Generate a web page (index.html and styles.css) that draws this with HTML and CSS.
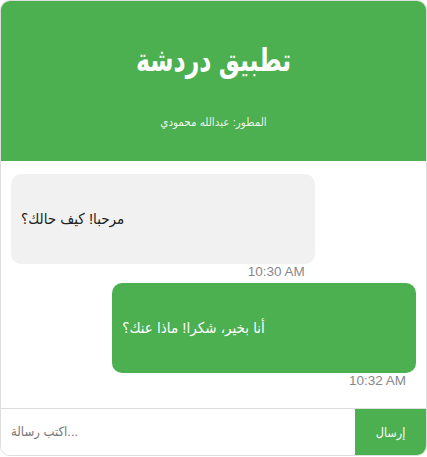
FILE: index.html
```html
<!DOCTYPE html>
<html lang="ar">
<head>
<meta charset="utf-8">
<title>تطبيق دردشة</title>
<link rel="stylesheet" href="styles.css">
</head>
<body>
<div class="chat">
  <header class="chat-header">
    <h1 class="chat-title"><span class="chat-title-text">تطبيق دردشة</span></h1>
    <p class="chat-sub">المطور: عبدالله محمودي</p>
  </header>
  <main class="messages">
    <div class="msg received">
      <div class="bubble">مرحبا! كيف حالك؟</div>
      <div class="time">10:30 AM</div>
    </div>
    <div class="msg sent">
      <div class="bubble">أنا بخير، شكرا! ماذا عنك؟</div>
      <div class="time">10:32 AM</div>
    </div>
  </main>
  <form class="composer">
    <input class="composer-input" type="text" placeholder="اكتب رسالة...">
    <button class="composer-send" type="button">إرسال</button>
  </form>
</div>
</body>
</html>
```
FILE: styles.css
```css
html, body {
  margin: 0;
  padding: 0;
  background: #ffffff;
}
body {
  font-family: "Liberation Sans", "DejaVu Sans Condensed", "DejaVu Sans", sans-serif;
}
.chat {
  box-sizing: border-box;
  width: 427px;
  height: 456px;
  border: 1px solid #dddddd;
  border-radius: 10px;
  overflow: hidden;
  display: flex;
  flex-direction: column;
  background: #ffffff;
}
.chat-header {
  background: #4caf50;
  color: #ffffff;
  text-align: center;
  padding: 20px;
  height: 160px;
  box-sizing: border-box;
  flex: none;
}
.chat-title {
  margin: 21px 0 0;
  font-size: 32px;
  font-weight: bold;
  line-height: 37px;
}
.chat-title-text {
  display: inline-block;
  transform: scaleX(0.82);
}
.chat-sub {
  margin: 35px 0 0;
  font-size: 11.5px;
  line-height: 16px;
  color: rgba(255, 255, 255, 0.9);
}
.messages {
  flex: 1;
  padding: 13px 10px 10px;
  display: flex;
  flex-direction: column;
  gap: 4px;
  overflow: hidden;
}
.msg {
  width: 75%;
  display: flex;
  flex-direction: column;
}
.msg.sent {
  align-self: flex-end;
}
.bubble {
  padding: 36px 10px;
  border-radius: 10px;
  font-size: 15px;
  line-height: 18px;
}
.received .bubble {
  background: #f1f1f1;
  color: #222222;
}
.sent .bubble {
  background: #4caf50;
  color: #ffffff;
}
.time {
  margin-top: 1px;
  padding-right: 10px;
  text-align: right;
  font-size: 13.5px;
  line-height: 14px;
  color: #888888;
}
.composer {
  margin: 0;
  display: flex;
  border-top: 1px solid #dddddd;
  flex: none;
}
.composer-input {
  flex: 1;
  min-width: 0;
  border: none;
  outline: none;
  padding: 15px 10px;
  font-family: inherit;
  font-size: 13px;
  line-height: 16px;
  color: #333333;
}
.composer-input::placeholder {
  color: #777777;
}
.composer-send {
  border: none;
  background: #4caf50;
  color: #ffffff;
  padding: 0 20px;
  font-family: inherit;
  font-size: 12.5px;
  width: 71px;
}
```
